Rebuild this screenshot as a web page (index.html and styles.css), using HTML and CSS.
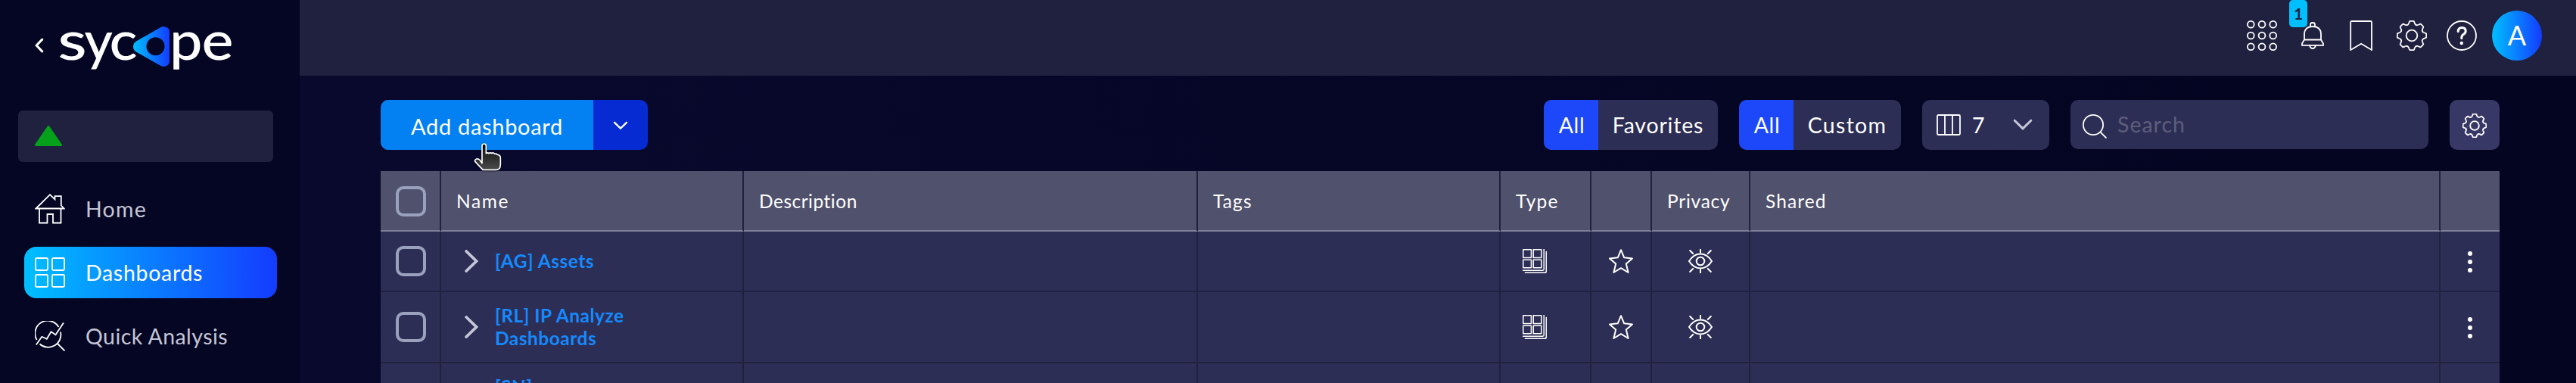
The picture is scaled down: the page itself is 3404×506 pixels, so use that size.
FILE: index.html
```html
<!DOCTYPE html>
<html lang="en">
<head>
<meta charset="utf-8">
<title>Sycope – Dashboards</title>
<link rel="stylesheet" href="styles.css">
</head>
<body>
<svg class="defs" aria-hidden="true">
  <defs>
    <linearGradient id="brand" x1="0" x2="1" y1="0" y2="0"><stop offset="0" stop-color="#00bfff"/><stop offset="1" stop-color="#143cff"/></linearGradient>
    <linearGradient id="hand" x1="0" x2="0" y1="0" y2="1"><stop offset="0" stop-color="#080808"/><stop offset="1" stop-color="#4c4c4c"/></linearGradient>
    <path id="tooth" d="M-4-15.8L-3.2-18.2Q-2.9-19.2-1.9-19.2H1.9Q2.9-19.2 3.2-18.2L4-15.8Q5.5-13 8.34-14"/>
    <symbol id="i-gear" viewBox="0 0 40 40">
      <g transform="translate(20 20)">
        <use href="#tooth"/><use href="#tooth" transform="rotate(45)"/><use href="#tooth" transform="rotate(90)"/><use href="#tooth" transform="rotate(135)"/><use href="#tooth" transform="rotate(180)"/><use href="#tooth" transform="rotate(225)"/><use href="#tooth" transform="rotate(270)"/><use href="#tooth" transform="rotate(315)"/>
        <circle r="7.3"/>
      </g>
    </symbol>
    <symbol id="i-stack" viewBox="0 0 32 32">
      <rect x=".8" y=".8" width="10.6" height="10.6"/><rect x="14.2" y=".8" width="10.6" height="10.6"/><rect x=".8" y="14.2" width="10.6" height="10.6"/><rect x="14.2" y="14.2" width="10.6" height="10.6"/>
      <path d="M28.2 0V26.6Q28.2 28.2 26.6 28.2H0M31.3 3.4V29.5Q31.3 31.3 29.5 31.3H3.4"/>
    </symbol>
    <symbol id="i-star" viewBox="0 0 32 32"><path d="M16 1.2L20.2 11.3L31 12.4L22.8 19.6L25.6 31L16 25.2L6.4 31L9.2 19.6L1 12.4L11.8 11.3Z"/></symbol>
    <symbol id="i-eye" viewBox="0 0 32 32"><path d="M1 16Q7 6.5 16 6.5T31 16Q25 25.5 16 25.5T1 16ZM16 .3V4.6M16 27.4V31.7M2.2 2L6.2 6M29.8 2L25.8 6M2.2 30L6.2 26M29.8 30L25.8 26"/><circle cx="16" cy="16" r="5.3"/></symbol>
    <symbol id="i-dots" viewBox="0 0 6 28"><circle cx="3" cy="3" r="3"/><circle cx="3" cy="14" r="3"/><circle cx="3" cy="25" r="3"/></symbol>
    <symbol id="i-chevron" viewBox="0 0 18 30"><path d="M2.2 2L15.5 15L2.2 28"/></symbol>
  </defs>
</svg>

<div class="app">
  <aside class="sidebar">
    <div class="brand">
      <svg class="collapse" width="12" height="20" viewBox="0 0 12 20"><path d="M9.7 2.1L2.2 10L9.7 17.9"/></svg>
      <svg class="logo" width="234" height="64" viewBox="0 0 234 64">
        <text class="wordmark" y="48.500"><tspan x="-.8" textLength="38.500" lengthAdjust="spacingAndGlyphs">s</tspan><tspan x="34.500">y</tspan><tspan x="67.500" textLength="37" lengthAdjust="spacingAndGlyphs">c</tspan></text>
        <path class="gap" d="M149 4V60L96 31Z"/>
        <path fill="url(#brand)" d="M103 24.5L135 6.2Q139.500 3.800 144 6.600Q147 8.600 147 12.500V50.500Q147 54.500 144 56.500Q139.500 59.200 135 56.800L103 38.500Q99 36 99 31.500Q99 27 103 24.500Z"/>
        <circle class="hole" cx="128.500" cy="31.300" r="12"/>
        <text class="wordmark" y="48.500"><tspan x="147" textLength="43.500" lengthAdjust="spacingAndGlyphs">p</tspan><tspan x="189.500" textLength="42" lengthAdjust="spacingAndGlyphs">e</tspan></text>
      </svg>
    </div>
    <div class="status"><svg width="38" height="30" viewBox="0 0 38 30"><path d="M19 2.500L35.500 26.500H2.500Z"/></svg></div>
    <nav class="nav">
      <a class="item">
        <svg class="ico" viewBox="0 0 40 40"><path d="M1.500 19.500L20 1.200L26.500 7.400V3.200H34.800V15.500L38.500 19.500ZM6 19.500V38.500H16.500V27H24V38.500H34.500V19.500"/></svg>
        <span class="home">Home</span>
      </a>
      <a class="item active">
        <svg class="ico" viewBox="0 0 40 40"><rect x="1" y="1" width="16" height="16" rx="1.500"/><rect x="23" y="1" width="16" height="16" rx="1.500"/><rect x="1" y="23" width="16" height="16" rx="1.500"/><rect x="23" y="23" width="16" height="16" rx="1.500"/></svg>
        <span>Dashboards</span>
      </a>
      <a class="item">
        <svg class="ico" viewBox="0 0 40 40"><path d="M31.500 8A16.700 16.700 0 0 0 2.600 25M34 14.500A16.700 16.700 0 0 1 6.500 30.500M29.500 29.500L39.500 39.500M1.800 31.500L9.300 20.800L15.800 23.800L21.500 14.200L27.500 18.200L38 2.500"/></svg>
        <span class="quick">Quick Analysis</span>
      </a>
    </nav>
  </aside>

  <div class="main">
    <header class="topbar">
      <svg class="ico" viewBox="0 0 40 40"><g><circle cx="5.300" cy="5.300" r="4.400"/><circle cx="20" cy="5.300" r="4.400"/><circle cx="34.700" cy="5.300" r="4.400"/><circle cx="5.300" cy="20" r="4.400"/><circle cx="20" cy="20" r="4.400"/><circle cx="34.700" cy="20" r="4.400"/><circle cx="5.300" cy="34.700" r="4.400"/><circle cx="20" cy="34.700" r="4.400"/><circle cx="34.700" cy="34.700" r="4.400"/></g></svg>
      <div class="bell">
        <svg class="ico" viewBox="0 0 40 40"><path d="M18 8.500V5.500Q18 3 21 3T24 5.500V8.500M7 32.800V30.500L10 25.500V17Q11 8 21 8T32 17V25.500L35 30.500V32.800ZM10 25.500H32M17 33Q18 37 21 37T25 33"/></svg>
        <span class="badge">1</span>
      </div>
      <svg class="ico" viewBox="0 0 40 40"><path d="M5.200 39V2.500Q5.200 1 6.700 1H31.500Q33 1 33 2.500V39L19.100 30.800Z"/></svg>
      <svg class="ico" viewBox="0 0 40 40"><use href="#i-gear"/></svg>
      <svg class="ico" viewBox="0 0 40 40"><circle cx="20" cy="20" r="19"/><path class="thick" d="M15.200 14.500Q15.200 9.500 20.200 9.500T25.200 14Q25.200 16.600 22.500 18.200T19.800 22.500V23.500"/><circle class="dot" cx="19.800" cy="30" r="2.200"/></svg>
      <div class="avatar">A</div>
    </header>

    <main class="content">
      <div class="toolbar">
        <div class="split">
          <button class="add">Add dashboard</button>
          <button class="more"><svg width="20" height="12" viewBox="0 0 20 12"><path d="M2 1.800L10 9.500L18 1.800"/></svg></button>
          <svg class="cursor" width="38" height="40" viewBox="78 54 114 120"><path d="M111 137V68Q111 60 119 60T127 68V98Q132 93 137 98Q143 93 149 98Q155 93 161 100Q167 98 172 103Q184 104 184 116V142Q184 163 168 163H114L84 131Q80 126 86 122Q94 117 102 124L111 137Z"/></svg>
        </div>
        <div class="filters">
          <div class="segment"><button class="on">All</button><button class="fav">Favorites</button></div>
          <div class="segment"><button class="on">All</button><button class="cust">Custom</button></div>
          <button class="columns">
            <svg class="cols" width="32" height="28" viewBox="0 0 32 28"><rect x="1" y="1" width="30" height="26" rx="1.500"/><path d="M11 1V27M21 1V27"/></svg>
            <span>7</span>
            <svg class="caret" width="26" height="16" viewBox="0 0 26 16"><path d="M2.200 2.200L13 12.800L23.800 2.200"/></svg>
          </button>
          <div class="search">
            <svg width="32" height="32" viewBox="0 0 32 32"><circle cx="14" cy="14" r="13.100"/><path d="M23.300 23.300L31.500 31.500"/></svg>
            <span>Search</span>
          </div>
          <button class="settings"><svg width="32" height="32"><use href="#i-gear"/></svg></button>
        </div>
      </div>

      <div class="table">
        <div class="row head">
          <div class="pick"><i class="check"></i></div>
          <div class="w-name">Name</div>
          <div>Description</div>
          <div class="w-tags">Tags</div>
          <div class="w-type">Type</div>
          <div></div>
          <div class="w-privacy">Privacy</div>
          <div class="w-shared">Shared</div>
          <div></div>
        </div>
        <div class="row">
          <div class="pick"><i class="check"></i></div>
          <div class="name"><svg class="chev"><use href="#i-chevron"/></svg><a class="ag">[AG] Assets</a></div>
          <div></div><div></div>
          <div class="type"><svg class="cell-ico thin"><use href="#i-stack"/></svg></div>
          <div class="center"><svg class="cell-ico"><use href="#i-star"/></svg></div>
          <div class="center"><svg class="cell-ico"><use href="#i-eye"/></svg></div>
          <div></div>
          <div class="center"><svg class="dots"><use href="#i-dots"/></svg></div>
        </div>
        <div class="row">
          <div class="pick"><i class="check"></i></div>
          <div class="name"><svg class="chev"><use href="#i-chevron"/></svg><a>[RL] IP Analyze<br>Dashboards</a></div>
          <div></div><div></div>
          <div class="type"><svg class="cell-ico thin"><use href="#i-stack"/></svg></div>
          <div class="center"><svg class="cell-ico"><use href="#i-star"/></svg></div>
          <div class="center"><svg class="cell-ico"><use href="#i-eye"/></svg></div>
          <div></div>
          <div class="center"><svg class="dots"><use href="#i-dots"/></svg></div>
        </div>
        <div class="row last">
          <div></div>
          <div class="name"><a class="sn">[SN]</a></div>
          <div></div><div></div><div></div><div></div><div></div><div></div><div></div>
        </div>
      </div>
    </main>
  </div>
</div>
</body>
</html>
```
FILE: styles.css
```css
* { box-sizing: border-box; }
body {
  margin: 0;
  height: 506px;
  overflow: hidden;
  font-family: Lato, "Open Sans", sans-serif;
  font-size: 28.5px;
  color: #fff;
  background: #040521;
}
button {
  border: 0;
  margin: 0;
  padding: 0;
  background: none;
  color: inherit;
  font: inherit;
  letter-spacing: inherit;
  white-space: nowrap;
}
svg { display: block; flex: none; fill: none; stroke: #fff; stroke-width: 1.8; }
.defs { position: absolute; width: 0; height: 0; }
.app { display: flex; height: 506px; }
.ico { width: 40px; height: 40px; }

/* Sidebar */
.sidebar { width: 396px; flex: none; background: #050623; }
.brand { display: flex; height: 146px; padding: 30px 0 0 46px; }
.collapse { margin-top: 20px; stroke-width: 3; stroke-linecap: round; }
.logo { margin-left: 19px; overflow: visible; stroke: none; }
.wordmark { font-size: 72px; font-weight: 500; fill: #fff; }
.gap, .hole { fill: #050623; }
.status {
  width: 337px;
  height: 68px;
  margin-left: 24px;
  padding: 19px 0 0 21px;
  border-radius: 6px;
  background: #20213f;
}
.status svg { fill: #05a11b; stroke: #05a11b; stroke-width: 3; stroke-linejoin: round; }
.nav { display: flex; flex-direction: column; gap: 16px; padding: 28px 30px 0 32px; }
.item {
  display: flex;
  align-items: center;
  gap: 27px;
  height: 68px;
  padding-left: 14px;
  border-radius: 16px;
  color: #c4c5d6;
  letter-spacing: .7px;
  white-space: nowrap;
}
.active { background: linear-gradient(90deg, #00bfff, #143cff); color: #fff; }
.home { letter-spacing: 1.3px; }
.quick { letter-spacing: .45px; }

/* Top bar */
.main { flex: 1; min-width: 0; background: linear-gradient(90deg, #08092d, #040521 85%); }
.topbar {
  display: flex;
  justify-content: flex-end;
  align-items: center;
  gap: 26px;
  height: 100px;
  padding: 0 45px 6px 0;
  background: #20213f;
}
.bell { position: relative; }
.badge {
  position: absolute;
  left: -10px;
  top: -27px;
  width: 24px;
  height: 36px;
  border-radius: 5px;
  background: #00bfff;
  color: #20213f;
  font-size: 21px;
  font-weight: 700;
  line-height: 36px;
  text-align: center;
}
.thick { stroke-width: 3; stroke-linecap: round; }
.dot { fill: #fff; stroke: none; }
.avatar {
  width: 66px;
  height: 66px;
  margin-left: -6px;
  border-radius: 50%;
  background: linear-gradient(90deg, #00bfff, #143cff);
  font-size: 36px;
  line-height: 64px;
  text-align: center;
}

/* Toolbar */
.content { padding: 32px 101px 0 107px; }
.toolbar { display: flex; justify-content: space-between; height: 94px; }
.split { position: relative; display: flex; height: 66px; }
.add {
  width: 281px;
  padding-top: 2px;
  border-radius: 10px 0 0 10px;
  background: #0380f2;
  font-size: 29px;
  letter-spacing: .7px;
}
.more {
  display: flex;
  justify-content: center;
  width: 72px;
  padding-top: 28px;
  border-radius: 0 10px 10px 0;
  background: #062bd2;
}
.more svg { stroke-width: 2.4; stroke-linecap: round; }
.cursor {
  position: absolute;
  left: 123px;
  top: 56px;
  fill: url(#hand);
  stroke-width: 5;
  stroke-linejoin: round;
  filter: drop-shadow(0 1px 1px rgba(0, 0, 0, .5));
}
.filters { display: flex; gap: 28px; height: 66px; letter-spacing: .6px; }
.segment { display: flex; border-radius: 10px; overflow: hidden; background: #2d2e55; }
.on { width: 72px; padding-left: 2px; background: #1c48fa; }
.fav { width: 158px; letter-spacing: .8px; }
.cust { width: 142px; letter-spacing: 1.3px; }
.columns {
  display: flex;
  align-items: center;
  width: 168px;
  padding-left: 19px;
  border-radius: 10px;
  background: #2d2e55;
}
.columns span { width: 53px; margin-left: 15px; text-align: left; }
.caret { margin-left: 1px; stroke: #c5c6d8; stroke-width: 3; stroke-linecap: round; }
.search {
  display: flex;
  align-items: center;
  gap: 14px;
  width: 473px;
  height: 65px;
  padding-left: 16px;
  border-radius: 10px;
  background: #2d2e55;
  color: #5d5e7c;
  letter-spacing: 1px;
}
.search svg { margin-top: 5px; }
.search span { margin-top: -2px; }
.settings {
  display: flex;
  justify-content: center;
  align-items: center;
  width: 66px;
  padding-top: 2px;
  border-radius: 10px;
  background: #383866;
}
.settings svg { stroke-width: 2.3; }

/* Table */
.table { height: 280px; overflow: hidden; font-size: 24.5px; }
.row {
  display: grid;
  grid-template-columns: 80px 400px 600px 400px 120px 80px 130px 912px 78px;
  line-height: 30px;
  letter-spacing: .5px;
}
.row > div {
  display: flex;
  align-items: center;
  min-height: 80px;
  padding: 16px 20px;
  border-right: 2px solid #20213f;
  border-bottom: 2px solid #20213f;
  background: #2d2e55;
}
.row > div:last-child { border-right: 0; }
.row.head > div { height: 80px; padding-top: 17px; background: #50516c; border-bottom-color: #7e7f99; }
.row.last > div { align-items: flex-start; }
.row .w-name { letter-spacing: 1.6px; }
.row .w-tags { letter-spacing: 1.1px; }
.row .w-type { letter-spacing: 1.3px; }
.row .w-privacy { letter-spacing: .75px; }
.row .w-shared { letter-spacing: 1.1px; }
.row > .center { justify-content: center; padding: 0; }
.row > .type { padding-left: 29px; }
.check { flex: none; width: 40px; height: 40px; border: 4px solid #9aa1bd; border-radius: 10px; }
.name { color: #158aff; font-weight: 700; }
.row > .name { padding-left: 31px; }
.name a { margin-left: 22px; }
.chev { width: 18px; height: 30px; stroke: #c5c6d8; stroke-width: 3.8; stroke-linecap: round; }
.cell-ico { width: 32px; height: 32px; stroke-width: 2; stroke-linejoin: round; stroke-linecap: round; }
.thin { stroke-width: 1.5; }
.dots { width: 6px; height: 28px; margin-top: 2px; fill: #fff; stroke: none; }
.row > div.name a.sn { margin-left: 40px; }
```
